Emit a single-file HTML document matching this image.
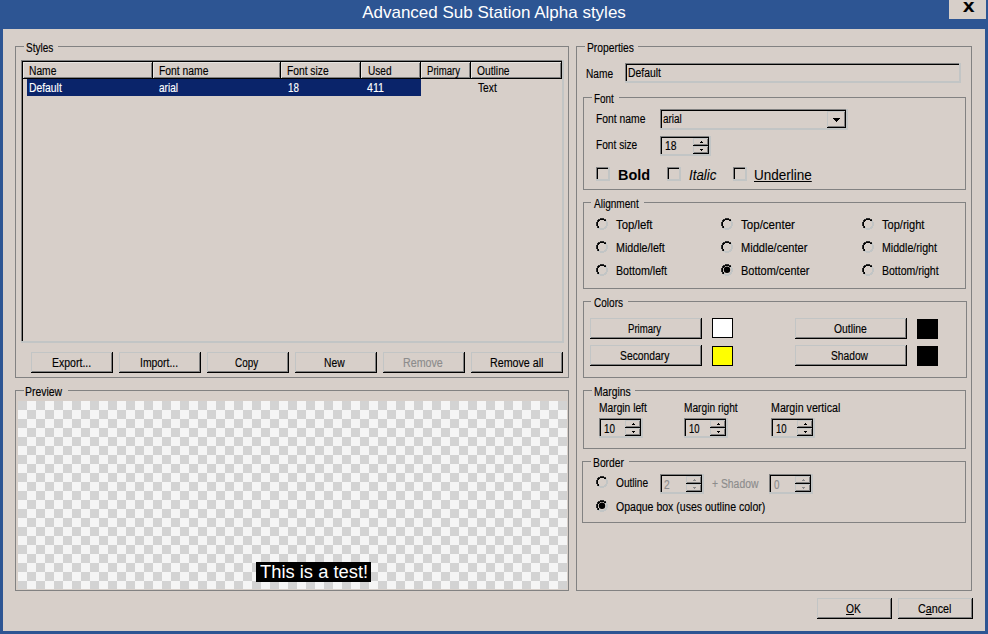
<!DOCTYPE html>
<html><head><meta charset="utf-8"><title>Advanced Sub Station Alpha styles</title>
<style>
html,body{margin:0;padding:0}
body{width:988px;height:634px;overflow:hidden;background:#2D5593;position:relative;font-family:"Liberation Sans",sans-serif;font-size:12.5px;color:#000;}
div,span{position:absolute;box-sizing:border-box;white-space:nowrap}
.t{transform-origin:0 0;-webkit-text-stroke:0.15px}
.client{left:3px;top:29px;width:982px;height:602px;background:#D7CFC9}
.gb{border:1px solid #828282}
.gl{background:#D7CFC9}
.btn{background:#D7CFC9;box-shadow:inset -1px -1px 0 #000,inset 1px 1px 0 #C2C5C5,inset -2px -2px 0 #808080}
.sunk{box-shadow:inset -2px -2px 0 #C2C5C5,inset 1px 1px 0 #808080,inset 2px 2px 0 #000}
.hdr{height:17px;background:#D7CFC9;box-shadow:inset -1px -1px 0 #000,inset 1px 1px 0 #e6e4e1,inset -2px -2px 0 #808080}
.sw{border:1px solid #000}
.sb{width:16px;height:8px;left:26px;box-shadow:inset -1px -1px 0 #000,inset 1px 1px 0 #C2C5C5,inset -2px -2px 0 #808080}
</style></head>
<body>
<div class="client"></div>
<div style="left:0;top:0;width:988px;height:29px;text-align:center;color:#fff;font-size:17px;line-height:25px;">Advanced Sub Station Alpha styles</div>
<div style="left:949px;top:0;width:37px;height:19px;background:#D7CFC9"></div>
<span class="t" style="left:962.80px;top:-4px;line-height:20px;height:20px;font-size:18px;font-weight:bold;transform:scaleX(1.1400)">x</span>
<div class="gb" style="left:15px;top:46px;width:554px;height:332px"></div>
<div class="gl" style="left:24px;top:46px;width:34px;height:1px"></div>
<span class="t" style="left:26.30px;top:41px;line-height:14px;height:14px;transform:scaleX(0.8020)">Styles</span>
<div class="sunk" style="left:21px;top:60px;width:543px;height:283px"></div>
<div class="hdr" style="left:23px;top:62px;width:130px"></div>
<span class="t" style="left:28.78px;top:64px;line-height:14px;height:14px;transform:scaleX(0.8212)">Name</span>
<div class="hdr" style="left:153px;top:62px;width:128px"></div>
<span class="t" style="left:158.87px;top:64px;line-height:14px;height:14px;transform:scaleX(0.8265)">Font name</span>
<div class="hdr" style="left:281px;top:62px;width:80px"></div>
<span class="t" style="left:286.68px;top:64px;line-height:14px;height:14px;transform:scaleX(0.8199)">Font size</span>
<div class="hdr" style="left:361px;top:62px;width:60px"></div>
<span class="t" style="left:367.50px;top:64px;line-height:14px;height:14px;transform:scaleX(0.8074)">Used</span>
<div class="hdr" style="left:421px;top:62px;width:50px"></div>
<span class="t" style="left:426.83px;top:64px;line-height:14px;height:14px;transform:scaleX(0.7663)">Primary</span>
<div class="hdr" style="left:471px;top:62px;width:91px"></div>
<span class="t" style="left:476.80px;top:64px;line-height:14px;height:14px;transform:scaleX(0.8221)">Outline</span>
<div style="left:27px;top:79px;width:394px;height:17px;background:#0A246A"></div>
<span class="t" style="left:28.77px;top:81px;line-height:14px;height:14px;color:#fff;transform:scaleX(0.8279)">Default</span>
<span class="t" style="left:159.00px;top:81px;line-height:14px;height:14px;color:#fff;transform:scaleX(0.8011)">arial</span>
<span class="t" style="left:288.30px;top:81px;line-height:14px;height:14px;color:#fff;transform:scaleX(0.7813)">18</span>
<span class="t" style="left:367.20px;top:81px;line-height:14px;height:14px;color:#fff;transform:scaleX(0.8510)">411</span>
<span class="t" style="left:478.00px;top:81px;line-height:14px;height:14px;transform:scaleX(0.8187)">Text</span>
<div class="btn" style="left:31px;top:352px;width:82px;height:21px"></div>
<span class="t" style="left:51.76px;top:356px;line-height:14px;height:14px;transform:scaleX(0.8409)">Export...</span>
<div class="btn" style="left:119px;top:352px;width:82px;height:21px"></div>
<span class="t" style="left:139.77px;top:356px;line-height:14px;height:14px;transform:scaleX(0.8294)">Import...</span>
<div class="btn" style="left:207px;top:352px;width:82px;height:21px"></div>
<span class="t" style="left:234.60px;top:356px;line-height:14px;height:14px;transform:scaleX(0.7918)">Copy</span>
<div class="btn" style="left:295px;top:352px;width:82px;height:21px"></div>
<span class="t" style="left:323.78px;top:356px;line-height:14px;height:14px;transform:scaleX(0.8247)">New</span>
<div class="btn" style="left:383px;top:352px;width:82px;height:21px"></div>
<span class="t" style="left:402.64px;top:356px;line-height:14px;height:14px;color:#8c8c8c;transform:scaleX(0.8554)">Remove</span>
<div class="btn" style="left:471px;top:352px;width:92px;height:21px"></div>
<span class="t" style="left:489.75px;top:356px;line-height:14px;height:14px;transform:scaleX(0.8544)">Remove all</span>
<div class="gb" style="left:15px;top:390px;width:554px;height:201px"></div>
<div class="gl" style="left:24px;top:390px;width:44px;height:1px"></div>
<span class="t" style="left:25.26px;top:385px;line-height:14px;height:14px;transform:scaleX(0.8350)">Preview</span>
<div style="left:18px;top:401px;width:549px;height:188px;background-color:#f5f5f5;background-image:conic-gradient(#f5f5f5 25%,#d3d3d3 0 50%,#f5f5f5 0 75%,#d3d3d3 0);background-size:18px 18px;"></div>
<div style="left:256px;top:562px;width:115px;height:20px;background:#000"></div>
<span class="t" style="left:259.90px;top:562px;line-height:20px;height:20px;font-size:18px;color:#fff;-webkit-text-stroke:0;transform:scaleX(1.0197)">This is a test!</span>
<div class="gb" style="left:576px;top:46px;width:396px;height:545px"></div>
<div class="gl" style="left:585px;top:46px;width:53px;height:1px"></div>
<span class="t" style="left:586.68px;top:41px;line-height:14px;height:14px;transform:scaleX(0.8238)">Properties</span>
<span class="t" style="left:585.89px;top:67px;line-height:14px;height:14px;transform:scaleX(0.8119)">Name</span>
<div class="sunk" style="left:625px;top:63px;width:336px;height:20px"></div>
<span class="t" style="left:627.77px;top:66px;line-height:14px;height:14px;transform:scaleX(0.8305)">Default</span>
<div class="gb" style="left:583px;top:97px;width:383px;height:93px"></div>
<div class="gl" style="left:592px;top:97px;width:27px;height:1px"></div>
<span class="t" style="left:593.81px;top:92px;line-height:14px;height:14px;transform:scaleX(0.7906)">Font</span>
<span class="t" style="left:595.87px;top:112px;line-height:14px;height:14px;transform:scaleX(0.8265)">Font name</span>
<div class="sunk" style="left:660px;top:109px;width:188px;height:21px"><div style="left:167px;top:2px;width:19px;height:17px;box-shadow:inset -1px -1px 0 #000,inset 1px 1px 0 #C2C5C5,inset -2px -2px 0 #808080"></div><svg style="position:absolute;left:173px;top:9px" width="7" height="4" viewBox="0 0 7 4"><path d="M0 0h7v1h-1v1h-1v1h-1v1h-1v-1h-1v-1h-1v-1h-1z" fill="#000"/></svg></div>
<span class="t" style="left:662.90px;top:112px;line-height:14px;height:14px;transform:scaleX(0.7967)">arial</span>
<span class="t" style="left:595.89px;top:138px;line-height:14px;height:14px;transform:scaleX(0.8119)">Font size</span>
<div class="sunk" style="left:660px;top:136px;width:51px;height:20px"><div class="sb" style="top:2px;left:33px"></div><div class="sb" style="top:10px;left:33px"></div><svg style="position:absolute;left:33px;top:2px" width="16" height="16" viewBox="0 0 16 16"><path d="M8 3h1v1h1v1h-3v-1h1z M7 11h3v1h-1v1h-1v-1h-1z" fill="#000"/></svg></div>
<span class="t" style="left:664.70px;top:139px;line-height:14px;height:14px;color:#000;transform:scaleX(0.8243)">18</span>
<div class="sunk" style="left:596px;top:167px;width:14px;height:14px"></div>
<span class="t" style="left:617.80px;top:167px;line-height:16px;height:16px;font-size:14px;font-weight:bold;-webkit-text-stroke:0;transform:scaleX(1.0310)">Bold</span>
<div class="sunk" style="left:667px;top:167px;width:14px;height:14px"></div>
<span class="t" style="left:688.70px;top:167px;line-height:16px;height:16px;font-size:14px;font-style:italic;-webkit-text-stroke:0.05px;transform:scaleX(0.9484)">Italic</span>
<div class="sunk" style="left:733px;top:167px;width:14px;height:14px"></div>
<span class="t" style="left:753.54px;top:167px;line-height:16px;height:16px;font-size:14px;text-decoration:underline;-webkit-text-stroke:0.05px;transform:scaleX(0.9639)">Underline</span>
<div class="gb" style="left:583px;top:202px;width:383px;height:87px"></div>
<div class="gl" style="left:591px;top:202px;width:53px;height:1px"></div>
<span class="t" style="left:593.90px;top:197px;line-height:14px;height:14px;transform:scaleX(0.8038)">Alignment</span>
<svg style="position:absolute;left:596px;top:218px" width="12" height="12" viewBox="0 0 12 12" shape-rendering="crispEdges"><rect x="10" y="2" width="1" height="1" fill="#C2C5C5"/><rect x="10" y="3" width="1" height="1" fill="#C2C5C5"/><rect x="11" y="4" width="1" height="1" fill="#C2C5C5"/><rect x="11" y="5" width="1" height="1" fill="#C2C5C5"/><rect x="11" y="6" width="1" height="1" fill="#C2C5C5"/><rect x="11" y="7" width="1" height="1" fill="#C2C5C5"/><rect x="10" y="8" width="1" height="1" fill="#C2C5C5"/><rect x="10" y="9" width="1" height="1" fill="#C2C5C5"/><rect x="2" y="10" width="2" height="1" fill="#C2C5C5"/><rect x="8" y="10" width="2" height="1" fill="#C2C5C5"/><rect x="4" y="11" width="4" height="1" fill="#C2C5C5"/><rect x="9" y="3" width="1" height="1" fill="#C2C5C5"/><rect x="10" y="4" width="1" height="1" fill="#C2C5C5"/><rect x="10" y="5" width="1" height="1" fill="#C2C5C5"/><rect x="10" y="6" width="1" height="1" fill="#C2C5C5"/><rect x="10" y="7" width="1" height="1" fill="#C2C5C5"/><rect x="9" y="8" width="1" height="1" fill="#C2C5C5"/><rect x="8" y="9" width="2" height="1" fill="#C2C5C5"/><rect x="4" y="10" width="4" height="1" fill="#C2C5C5"/><rect x="3" y="9" width="1" height="1" fill="#C2C5C5"/><rect x="4" y="0" width="4" height="1" fill="#303030"/><rect x="2" y="1" width="2" height="1" fill="#303030"/><rect x="8" y="1" width="2" height="1" fill="#303030"/><rect x="1" y="2" width="1" height="1" fill="#303030"/><rect x="1" y="3" width="1" height="1" fill="#303030"/><rect x="0" y="4" width="1" height="1" fill="#303030"/><rect x="0" y="5" width="1" height="1" fill="#303030"/><rect x="0" y="6" width="1" height="1" fill="#303030"/><rect x="0" y="7" width="1" height="1" fill="#303030"/><rect x="1" y="8" width="1" height="1" fill="#303030"/><rect x="1" y="9" width="1" height="1" fill="#303030"/><rect x="4" y="1" width="4" height="1" fill="#000"/><rect x="2" y="2" width="2" height="1" fill="#000"/><rect x="8" y="2" width="2" height="1" fill="#000"/><rect x="2" y="3" width="1" height="1" fill="#000"/><rect x="1" y="4" width="1" height="1" fill="#000"/><rect x="1" y="5" width="1" height="1" fill="#000"/><rect x="1" y="6" width="1" height="1" fill="#000"/><rect x="1" y="7" width="1" height="1" fill="#000"/><rect x="2" y="8" width="1" height="1" fill="#000"/><rect x="2" y="9" width="1" height="1" fill="#000"/></svg>
<span class="t" style="left:615.90px;top:218px;line-height:14px;height:14px;transform:scaleX(0.9062)">Top/left</span>
<svg style="position:absolute;left:721px;top:218px" width="12" height="12" viewBox="0 0 12 12" shape-rendering="crispEdges"><rect x="10" y="2" width="1" height="1" fill="#C2C5C5"/><rect x="10" y="3" width="1" height="1" fill="#C2C5C5"/><rect x="11" y="4" width="1" height="1" fill="#C2C5C5"/><rect x="11" y="5" width="1" height="1" fill="#C2C5C5"/><rect x="11" y="6" width="1" height="1" fill="#C2C5C5"/><rect x="11" y="7" width="1" height="1" fill="#C2C5C5"/><rect x="10" y="8" width="1" height="1" fill="#C2C5C5"/><rect x="10" y="9" width="1" height="1" fill="#C2C5C5"/><rect x="2" y="10" width="2" height="1" fill="#C2C5C5"/><rect x="8" y="10" width="2" height="1" fill="#C2C5C5"/><rect x="4" y="11" width="4" height="1" fill="#C2C5C5"/><rect x="9" y="3" width="1" height="1" fill="#C2C5C5"/><rect x="10" y="4" width="1" height="1" fill="#C2C5C5"/><rect x="10" y="5" width="1" height="1" fill="#C2C5C5"/><rect x="10" y="6" width="1" height="1" fill="#C2C5C5"/><rect x="10" y="7" width="1" height="1" fill="#C2C5C5"/><rect x="9" y="8" width="1" height="1" fill="#C2C5C5"/><rect x="8" y="9" width="2" height="1" fill="#C2C5C5"/><rect x="4" y="10" width="4" height="1" fill="#C2C5C5"/><rect x="3" y="9" width="1" height="1" fill="#C2C5C5"/><rect x="4" y="0" width="4" height="1" fill="#303030"/><rect x="2" y="1" width="2" height="1" fill="#303030"/><rect x="8" y="1" width="2" height="1" fill="#303030"/><rect x="1" y="2" width="1" height="1" fill="#303030"/><rect x="1" y="3" width="1" height="1" fill="#303030"/><rect x="0" y="4" width="1" height="1" fill="#303030"/><rect x="0" y="5" width="1" height="1" fill="#303030"/><rect x="0" y="6" width="1" height="1" fill="#303030"/><rect x="0" y="7" width="1" height="1" fill="#303030"/><rect x="1" y="8" width="1" height="1" fill="#303030"/><rect x="1" y="9" width="1" height="1" fill="#303030"/><rect x="4" y="1" width="4" height="1" fill="#000"/><rect x="2" y="2" width="2" height="1" fill="#000"/><rect x="8" y="2" width="2" height="1" fill="#000"/><rect x="2" y="3" width="1" height="1" fill="#000"/><rect x="1" y="4" width="1" height="1" fill="#000"/><rect x="1" y="5" width="1" height="1" fill="#000"/><rect x="1" y="6" width="1" height="1" fill="#000"/><rect x="1" y="7" width="1" height="1" fill="#000"/><rect x="2" y="8" width="1" height="1" fill="#000"/><rect x="2" y="9" width="1" height="1" fill="#000"/></svg>
<span class="t" style="left:741.10px;top:218px;line-height:14px;height:14px;transform:scaleX(0.9243)">Top/center</span>
<svg style="position:absolute;left:862px;top:218px" width="12" height="12" viewBox="0 0 12 12" shape-rendering="crispEdges"><rect x="10" y="2" width="1" height="1" fill="#C2C5C5"/><rect x="10" y="3" width="1" height="1" fill="#C2C5C5"/><rect x="11" y="4" width="1" height="1" fill="#C2C5C5"/><rect x="11" y="5" width="1" height="1" fill="#C2C5C5"/><rect x="11" y="6" width="1" height="1" fill="#C2C5C5"/><rect x="11" y="7" width="1" height="1" fill="#C2C5C5"/><rect x="10" y="8" width="1" height="1" fill="#C2C5C5"/><rect x="10" y="9" width="1" height="1" fill="#C2C5C5"/><rect x="2" y="10" width="2" height="1" fill="#C2C5C5"/><rect x="8" y="10" width="2" height="1" fill="#C2C5C5"/><rect x="4" y="11" width="4" height="1" fill="#C2C5C5"/><rect x="9" y="3" width="1" height="1" fill="#C2C5C5"/><rect x="10" y="4" width="1" height="1" fill="#C2C5C5"/><rect x="10" y="5" width="1" height="1" fill="#C2C5C5"/><rect x="10" y="6" width="1" height="1" fill="#C2C5C5"/><rect x="10" y="7" width="1" height="1" fill="#C2C5C5"/><rect x="9" y="8" width="1" height="1" fill="#C2C5C5"/><rect x="8" y="9" width="2" height="1" fill="#C2C5C5"/><rect x="4" y="10" width="4" height="1" fill="#C2C5C5"/><rect x="3" y="9" width="1" height="1" fill="#C2C5C5"/><rect x="4" y="0" width="4" height="1" fill="#303030"/><rect x="2" y="1" width="2" height="1" fill="#303030"/><rect x="8" y="1" width="2" height="1" fill="#303030"/><rect x="1" y="2" width="1" height="1" fill="#303030"/><rect x="1" y="3" width="1" height="1" fill="#303030"/><rect x="0" y="4" width="1" height="1" fill="#303030"/><rect x="0" y="5" width="1" height="1" fill="#303030"/><rect x="0" y="6" width="1" height="1" fill="#303030"/><rect x="0" y="7" width="1" height="1" fill="#303030"/><rect x="1" y="8" width="1" height="1" fill="#303030"/><rect x="1" y="9" width="1" height="1" fill="#303030"/><rect x="4" y="1" width="4" height="1" fill="#000"/><rect x="2" y="2" width="2" height="1" fill="#000"/><rect x="8" y="2" width="2" height="1" fill="#000"/><rect x="2" y="3" width="1" height="1" fill="#000"/><rect x="1" y="4" width="1" height="1" fill="#000"/><rect x="1" y="5" width="1" height="1" fill="#000"/><rect x="1" y="6" width="1" height="1" fill="#000"/><rect x="1" y="7" width="1" height="1" fill="#000"/><rect x="2" y="8" width="1" height="1" fill="#000"/><rect x="2" y="9" width="1" height="1" fill="#000"/></svg>
<span class="t" style="left:882.30px;top:218px;line-height:14px;height:14px;transform:scaleX(0.8851)">Top/right</span>
<svg style="position:absolute;left:596px;top:241px" width="12" height="12" viewBox="0 0 12 12" shape-rendering="crispEdges"><rect x="10" y="2" width="1" height="1" fill="#C2C5C5"/><rect x="10" y="3" width="1" height="1" fill="#C2C5C5"/><rect x="11" y="4" width="1" height="1" fill="#C2C5C5"/><rect x="11" y="5" width="1" height="1" fill="#C2C5C5"/><rect x="11" y="6" width="1" height="1" fill="#C2C5C5"/><rect x="11" y="7" width="1" height="1" fill="#C2C5C5"/><rect x="10" y="8" width="1" height="1" fill="#C2C5C5"/><rect x="10" y="9" width="1" height="1" fill="#C2C5C5"/><rect x="2" y="10" width="2" height="1" fill="#C2C5C5"/><rect x="8" y="10" width="2" height="1" fill="#C2C5C5"/><rect x="4" y="11" width="4" height="1" fill="#C2C5C5"/><rect x="9" y="3" width="1" height="1" fill="#C2C5C5"/><rect x="10" y="4" width="1" height="1" fill="#C2C5C5"/><rect x="10" y="5" width="1" height="1" fill="#C2C5C5"/><rect x="10" y="6" width="1" height="1" fill="#C2C5C5"/><rect x="10" y="7" width="1" height="1" fill="#C2C5C5"/><rect x="9" y="8" width="1" height="1" fill="#C2C5C5"/><rect x="8" y="9" width="2" height="1" fill="#C2C5C5"/><rect x="4" y="10" width="4" height="1" fill="#C2C5C5"/><rect x="3" y="9" width="1" height="1" fill="#C2C5C5"/><rect x="4" y="0" width="4" height="1" fill="#303030"/><rect x="2" y="1" width="2" height="1" fill="#303030"/><rect x="8" y="1" width="2" height="1" fill="#303030"/><rect x="1" y="2" width="1" height="1" fill="#303030"/><rect x="1" y="3" width="1" height="1" fill="#303030"/><rect x="0" y="4" width="1" height="1" fill="#303030"/><rect x="0" y="5" width="1" height="1" fill="#303030"/><rect x="0" y="6" width="1" height="1" fill="#303030"/><rect x="0" y="7" width="1" height="1" fill="#303030"/><rect x="1" y="8" width="1" height="1" fill="#303030"/><rect x="1" y="9" width="1" height="1" fill="#303030"/><rect x="4" y="1" width="4" height="1" fill="#000"/><rect x="2" y="2" width="2" height="1" fill="#000"/><rect x="8" y="2" width="2" height="1" fill="#000"/><rect x="2" y="3" width="1" height="1" fill="#000"/><rect x="1" y="4" width="1" height="1" fill="#000"/><rect x="1" y="5" width="1" height="1" fill="#000"/><rect x="1" y="6" width="1" height="1" fill="#000"/><rect x="1" y="7" width="1" height="1" fill="#000"/><rect x="2" y="8" width="1" height="1" fill="#000"/><rect x="2" y="9" width="1" height="1" fill="#000"/></svg>
<span class="t" style="left:615.64px;top:241px;line-height:14px;height:14px;transform:scaleX(0.8567)">Middle/left</span>
<svg style="position:absolute;left:721px;top:241px" width="12" height="12" viewBox="0 0 12 12" shape-rendering="crispEdges"><rect x="10" y="2" width="1" height="1" fill="#C2C5C5"/><rect x="10" y="3" width="1" height="1" fill="#C2C5C5"/><rect x="11" y="4" width="1" height="1" fill="#C2C5C5"/><rect x="11" y="5" width="1" height="1" fill="#C2C5C5"/><rect x="11" y="6" width="1" height="1" fill="#C2C5C5"/><rect x="11" y="7" width="1" height="1" fill="#C2C5C5"/><rect x="10" y="8" width="1" height="1" fill="#C2C5C5"/><rect x="10" y="9" width="1" height="1" fill="#C2C5C5"/><rect x="2" y="10" width="2" height="1" fill="#C2C5C5"/><rect x="8" y="10" width="2" height="1" fill="#C2C5C5"/><rect x="4" y="11" width="4" height="1" fill="#C2C5C5"/><rect x="9" y="3" width="1" height="1" fill="#C2C5C5"/><rect x="10" y="4" width="1" height="1" fill="#C2C5C5"/><rect x="10" y="5" width="1" height="1" fill="#C2C5C5"/><rect x="10" y="6" width="1" height="1" fill="#C2C5C5"/><rect x="10" y="7" width="1" height="1" fill="#C2C5C5"/><rect x="9" y="8" width="1" height="1" fill="#C2C5C5"/><rect x="8" y="9" width="2" height="1" fill="#C2C5C5"/><rect x="4" y="10" width="4" height="1" fill="#C2C5C5"/><rect x="3" y="9" width="1" height="1" fill="#C2C5C5"/><rect x="4" y="0" width="4" height="1" fill="#303030"/><rect x="2" y="1" width="2" height="1" fill="#303030"/><rect x="8" y="1" width="2" height="1" fill="#303030"/><rect x="1" y="2" width="1" height="1" fill="#303030"/><rect x="1" y="3" width="1" height="1" fill="#303030"/><rect x="0" y="4" width="1" height="1" fill="#303030"/><rect x="0" y="5" width="1" height="1" fill="#303030"/><rect x="0" y="6" width="1" height="1" fill="#303030"/><rect x="0" y="7" width="1" height="1" fill="#303030"/><rect x="1" y="8" width="1" height="1" fill="#303030"/><rect x="1" y="9" width="1" height="1" fill="#303030"/><rect x="4" y="1" width="4" height="1" fill="#000"/><rect x="2" y="2" width="2" height="1" fill="#000"/><rect x="8" y="2" width="2" height="1" fill="#000"/><rect x="2" y="3" width="1" height="1" fill="#000"/><rect x="1" y="4" width="1" height="1" fill="#000"/><rect x="1" y="5" width="1" height="1" fill="#000"/><rect x="1" y="6" width="1" height="1" fill="#000"/><rect x="1" y="7" width="1" height="1" fill="#000"/><rect x="2" y="8" width="1" height="1" fill="#000"/><rect x="2" y="9" width="1" height="1" fill="#000"/></svg>
<span class="t" style="left:740.81px;top:241px;line-height:14px;height:14px;transform:scaleX(0.8853)">Middle/center</span>
<svg style="position:absolute;left:862px;top:241px" width="12" height="12" viewBox="0 0 12 12" shape-rendering="crispEdges"><rect x="10" y="2" width="1" height="1" fill="#C2C5C5"/><rect x="10" y="3" width="1" height="1" fill="#C2C5C5"/><rect x="11" y="4" width="1" height="1" fill="#C2C5C5"/><rect x="11" y="5" width="1" height="1" fill="#C2C5C5"/><rect x="11" y="6" width="1" height="1" fill="#C2C5C5"/><rect x="11" y="7" width="1" height="1" fill="#C2C5C5"/><rect x="10" y="8" width="1" height="1" fill="#C2C5C5"/><rect x="10" y="9" width="1" height="1" fill="#C2C5C5"/><rect x="2" y="10" width="2" height="1" fill="#C2C5C5"/><rect x="8" y="10" width="2" height="1" fill="#C2C5C5"/><rect x="4" y="11" width="4" height="1" fill="#C2C5C5"/><rect x="9" y="3" width="1" height="1" fill="#C2C5C5"/><rect x="10" y="4" width="1" height="1" fill="#C2C5C5"/><rect x="10" y="5" width="1" height="1" fill="#C2C5C5"/><rect x="10" y="6" width="1" height="1" fill="#C2C5C5"/><rect x="10" y="7" width="1" height="1" fill="#C2C5C5"/><rect x="9" y="8" width="1" height="1" fill="#C2C5C5"/><rect x="8" y="9" width="2" height="1" fill="#C2C5C5"/><rect x="4" y="10" width="4" height="1" fill="#C2C5C5"/><rect x="3" y="9" width="1" height="1" fill="#C2C5C5"/><rect x="4" y="0" width="4" height="1" fill="#303030"/><rect x="2" y="1" width="2" height="1" fill="#303030"/><rect x="8" y="1" width="2" height="1" fill="#303030"/><rect x="1" y="2" width="1" height="1" fill="#303030"/><rect x="1" y="3" width="1" height="1" fill="#303030"/><rect x="0" y="4" width="1" height="1" fill="#303030"/><rect x="0" y="5" width="1" height="1" fill="#303030"/><rect x="0" y="6" width="1" height="1" fill="#303030"/><rect x="0" y="7" width="1" height="1" fill="#303030"/><rect x="1" y="8" width="1" height="1" fill="#303030"/><rect x="1" y="9" width="1" height="1" fill="#303030"/><rect x="4" y="1" width="4" height="1" fill="#000"/><rect x="2" y="2" width="2" height="1" fill="#000"/><rect x="8" y="2" width="2" height="1" fill="#000"/><rect x="2" y="3" width="1" height="1" fill="#000"/><rect x="1" y="4" width="1" height="1" fill="#000"/><rect x="1" y="5" width="1" height="1" fill="#000"/><rect x="1" y="6" width="1" height="1" fill="#000"/><rect x="1" y="7" width="1" height="1" fill="#000"/><rect x="2" y="8" width="1" height="1" fill="#000"/><rect x="2" y="9" width="1" height="1" fill="#000"/></svg>
<span class="t" style="left:882.05px;top:241px;line-height:14px;height:14px;transform:scaleX(0.8497)">Middle/right</span>
<svg style="position:absolute;left:596px;top:264px" width="12" height="12" viewBox="0 0 12 12" shape-rendering="crispEdges"><rect x="10" y="2" width="1" height="1" fill="#C2C5C5"/><rect x="10" y="3" width="1" height="1" fill="#C2C5C5"/><rect x="11" y="4" width="1" height="1" fill="#C2C5C5"/><rect x="11" y="5" width="1" height="1" fill="#C2C5C5"/><rect x="11" y="6" width="1" height="1" fill="#C2C5C5"/><rect x="11" y="7" width="1" height="1" fill="#C2C5C5"/><rect x="10" y="8" width="1" height="1" fill="#C2C5C5"/><rect x="10" y="9" width="1" height="1" fill="#C2C5C5"/><rect x="2" y="10" width="2" height="1" fill="#C2C5C5"/><rect x="8" y="10" width="2" height="1" fill="#C2C5C5"/><rect x="4" y="11" width="4" height="1" fill="#C2C5C5"/><rect x="9" y="3" width="1" height="1" fill="#C2C5C5"/><rect x="10" y="4" width="1" height="1" fill="#C2C5C5"/><rect x="10" y="5" width="1" height="1" fill="#C2C5C5"/><rect x="10" y="6" width="1" height="1" fill="#C2C5C5"/><rect x="10" y="7" width="1" height="1" fill="#C2C5C5"/><rect x="9" y="8" width="1" height="1" fill="#C2C5C5"/><rect x="8" y="9" width="2" height="1" fill="#C2C5C5"/><rect x="4" y="10" width="4" height="1" fill="#C2C5C5"/><rect x="3" y="9" width="1" height="1" fill="#C2C5C5"/><rect x="4" y="0" width="4" height="1" fill="#303030"/><rect x="2" y="1" width="2" height="1" fill="#303030"/><rect x="8" y="1" width="2" height="1" fill="#303030"/><rect x="1" y="2" width="1" height="1" fill="#303030"/><rect x="1" y="3" width="1" height="1" fill="#303030"/><rect x="0" y="4" width="1" height="1" fill="#303030"/><rect x="0" y="5" width="1" height="1" fill="#303030"/><rect x="0" y="6" width="1" height="1" fill="#303030"/><rect x="0" y="7" width="1" height="1" fill="#303030"/><rect x="1" y="8" width="1" height="1" fill="#303030"/><rect x="1" y="9" width="1" height="1" fill="#303030"/><rect x="4" y="1" width="4" height="1" fill="#000"/><rect x="2" y="2" width="2" height="1" fill="#000"/><rect x="8" y="2" width="2" height="1" fill="#000"/><rect x="2" y="3" width="1" height="1" fill="#000"/><rect x="1" y="4" width="1" height="1" fill="#000"/><rect x="1" y="5" width="1" height="1" fill="#000"/><rect x="1" y="6" width="1" height="1" fill="#000"/><rect x="1" y="7" width="1" height="1" fill="#000"/><rect x="2" y="8" width="1" height="1" fill="#000"/><rect x="2" y="9" width="1" height="1" fill="#000"/></svg>
<span class="t" style="left:615.65px;top:264px;line-height:14px;height:14px;transform:scaleX(0.8537)">Bottom/left</span>
<svg style="position:absolute;left:721px;top:264px" width="12" height="12" viewBox="0 0 12 12" shape-rendering="crispEdges"><rect x="10" y="2" width="1" height="1" fill="#C2C5C5"/><rect x="10" y="3" width="1" height="1" fill="#C2C5C5"/><rect x="11" y="4" width="1" height="1" fill="#C2C5C5"/><rect x="11" y="5" width="1" height="1" fill="#C2C5C5"/><rect x="11" y="6" width="1" height="1" fill="#C2C5C5"/><rect x="11" y="7" width="1" height="1" fill="#C2C5C5"/><rect x="10" y="8" width="1" height="1" fill="#C2C5C5"/><rect x="10" y="9" width="1" height="1" fill="#C2C5C5"/><rect x="2" y="10" width="2" height="1" fill="#C2C5C5"/><rect x="8" y="10" width="2" height="1" fill="#C2C5C5"/><rect x="4" y="11" width="4" height="1" fill="#C2C5C5"/><rect x="9" y="3" width="1" height="1" fill="#C2C5C5"/><rect x="10" y="4" width="1" height="1" fill="#C2C5C5"/><rect x="10" y="5" width="1" height="1" fill="#C2C5C5"/><rect x="10" y="6" width="1" height="1" fill="#C2C5C5"/><rect x="10" y="7" width="1" height="1" fill="#C2C5C5"/><rect x="9" y="8" width="1" height="1" fill="#C2C5C5"/><rect x="8" y="9" width="2" height="1" fill="#C2C5C5"/><rect x="4" y="10" width="4" height="1" fill="#C2C5C5"/><rect x="3" y="9" width="1" height="1" fill="#C2C5C5"/><rect x="4" y="0" width="4" height="1" fill="#303030"/><rect x="2" y="1" width="2" height="1" fill="#303030"/><rect x="8" y="1" width="2" height="1" fill="#303030"/><rect x="1" y="2" width="1" height="1" fill="#303030"/><rect x="1" y="3" width="1" height="1" fill="#303030"/><rect x="0" y="4" width="1" height="1" fill="#303030"/><rect x="0" y="5" width="1" height="1" fill="#303030"/><rect x="0" y="6" width="1" height="1" fill="#303030"/><rect x="0" y="7" width="1" height="1" fill="#303030"/><rect x="1" y="8" width="1" height="1" fill="#303030"/><rect x="1" y="9" width="1" height="1" fill="#303030"/><rect x="4" y="1" width="4" height="1" fill="#000"/><rect x="2" y="2" width="2" height="1" fill="#000"/><rect x="8" y="2" width="2" height="1" fill="#000"/><rect x="2" y="3" width="1" height="1" fill="#000"/><rect x="1" y="4" width="1" height="1" fill="#000"/><rect x="1" y="5" width="1" height="1" fill="#000"/><rect x="1" y="6" width="1" height="1" fill="#000"/><rect x="1" y="7" width="1" height="1" fill="#000"/><rect x="2" y="8" width="1" height="1" fill="#000"/><rect x="2" y="9" width="1" height="1" fill="#000"/></svg>
<svg style="position:absolute;left:721px;top:264px" width="12" height="12" viewBox="0 0 12 12"><circle cx="6" cy="5.8" r="3.2" fill="#000"/></svg>
<span class="t" style="left:740.82px;top:264px;line-height:14px;height:14px;transform:scaleX(0.8793)">Bottom/center</span>
<svg style="position:absolute;left:862px;top:264px" width="12" height="12" viewBox="0 0 12 12" shape-rendering="crispEdges"><rect x="10" y="2" width="1" height="1" fill="#C2C5C5"/><rect x="10" y="3" width="1" height="1" fill="#C2C5C5"/><rect x="11" y="4" width="1" height="1" fill="#C2C5C5"/><rect x="11" y="5" width="1" height="1" fill="#C2C5C5"/><rect x="11" y="6" width="1" height="1" fill="#C2C5C5"/><rect x="11" y="7" width="1" height="1" fill="#C2C5C5"/><rect x="10" y="8" width="1" height="1" fill="#C2C5C5"/><rect x="10" y="9" width="1" height="1" fill="#C2C5C5"/><rect x="2" y="10" width="2" height="1" fill="#C2C5C5"/><rect x="8" y="10" width="2" height="1" fill="#C2C5C5"/><rect x="4" y="11" width="4" height="1" fill="#C2C5C5"/><rect x="9" y="3" width="1" height="1" fill="#C2C5C5"/><rect x="10" y="4" width="1" height="1" fill="#C2C5C5"/><rect x="10" y="5" width="1" height="1" fill="#C2C5C5"/><rect x="10" y="6" width="1" height="1" fill="#C2C5C5"/><rect x="10" y="7" width="1" height="1" fill="#C2C5C5"/><rect x="9" y="8" width="1" height="1" fill="#C2C5C5"/><rect x="8" y="9" width="2" height="1" fill="#C2C5C5"/><rect x="4" y="10" width="4" height="1" fill="#C2C5C5"/><rect x="3" y="9" width="1" height="1" fill="#C2C5C5"/><rect x="4" y="0" width="4" height="1" fill="#303030"/><rect x="2" y="1" width="2" height="1" fill="#303030"/><rect x="8" y="1" width="2" height="1" fill="#303030"/><rect x="1" y="2" width="1" height="1" fill="#303030"/><rect x="1" y="3" width="1" height="1" fill="#303030"/><rect x="0" y="4" width="1" height="1" fill="#303030"/><rect x="0" y="5" width="1" height="1" fill="#303030"/><rect x="0" y="6" width="1" height="1" fill="#303030"/><rect x="0" y="7" width="1" height="1" fill="#303030"/><rect x="1" y="8" width="1" height="1" fill="#303030"/><rect x="1" y="9" width="1" height="1" fill="#303030"/><rect x="4" y="1" width="4" height="1" fill="#000"/><rect x="2" y="2" width="2" height="1" fill="#000"/><rect x="8" y="2" width="2" height="1" fill="#000"/><rect x="2" y="3" width="1" height="1" fill="#000"/><rect x="1" y="4" width="1" height="1" fill="#000"/><rect x="1" y="5" width="1" height="1" fill="#000"/><rect x="1" y="6" width="1" height="1" fill="#000"/><rect x="1" y="7" width="1" height="1" fill="#000"/><rect x="2" y="8" width="1" height="1" fill="#000"/><rect x="2" y="9" width="1" height="1" fill="#000"/></svg>
<span class="t" style="left:882.06px;top:264px;line-height:14px;height:14px;transform:scaleX(0.8399)">Bottom/right</span>
<div class="gb" style="left:583px;top:301px;width:384px;height:77px"></div>
<div class="gl" style="left:591px;top:301px;width:37px;height:1px"></div>
<span class="t" style="left:593.80px;top:296px;line-height:14px;height:14px;transform:scaleX(0.8029)">Colors</span>
<div class="btn" style="left:590px;top:318px;width:112px;height:21px"></div>
<span class="t" style="left:627.83px;top:322px;line-height:14px;height:14px;transform:scaleX(0.7686)">Primary</span>
<div class="btn" style="left:590px;top:345px;width:112px;height:21px"></div>
<span class="t" style="left:620.30px;top:349px;line-height:14px;height:14px;transform:scaleX(0.8263)">Secondary</span>
<div class="btn" style="left:795px;top:318px;width:112px;height:21px"></div>
<span class="t" style="left:833.50px;top:322px;line-height:14px;height:14px;transform:scaleX(0.8272)">Outline</span>
<div class="btn" style="left:795px;top:345px;width:112px;height:21px"></div>
<span class="t" style="left:831.40px;top:349px;line-height:14px;height:14px;transform:scaleX(0.8192)">Shadow</span>
<div class="sw" style="left:712px;top:318px;width:21px;height:20px;background:#fff"></div>
<div class="sw" style="left:712px;top:346px;width:21px;height:20px;background:#ffff00"></div>
<div class="sw" style="left:917px;top:319px;width:21px;height:20px;background:#000"></div>
<div class="sw" style="left:917px;top:346px;width:21px;height:20px;background:#000"></div>
<div class="gb" style="left:583px;top:390px;width:383px;height:59px"></div>
<div class="gl" style="left:592px;top:390px;width:43px;height:1px"></div>
<span class="t" style="left:593.77px;top:385px;line-height:14px;height:14px;transform:scaleX(0.8262)">Margins</span>
<span class="t" style="left:598.88px;top:401px;line-height:14px;height:14px;transform:scaleX(0.8189)">Margin left</span>
<span class="t" style="left:683.79px;top:401px;line-height:14px;height:14px;transform:scaleX(0.8134)">Margin right</span>
<span class="t" style="left:770.75px;top:401px;line-height:14px;height:14px;transform:scaleX(0.8529)">Margin vertical</span>
<div class="sunk" style="left:599px;top:418px;width:44px;height:20px"><div class="sb" style="top:2px;left:26px"></div><div class="sb" style="top:10px;left:26px"></div><svg style="position:absolute;left:26px;top:2px" width="16" height="16" viewBox="0 0 16 16"><path d="M8 3h1v1h1v1h-3v-1h1z M7 11h3v1h-1v1h-1v-1h-1z" fill="#000"/></svg></div>
<span class="t" style="left:604.30px;top:422px;line-height:14px;height:14px;color:#000;transform:scaleX(0.7884)">10</span>
<div class="sunk" style="left:684px;top:418px;width:44px;height:20px"><div class="sb" style="top:2px;left:26px"></div><div class="sb" style="top:10px;left:26px"></div><svg style="position:absolute;left:26px;top:2px" width="16" height="16" viewBox="0 0 16 16"><path d="M8 3h1v1h1v1h-3v-1h1z M7 11h3v1h-1v1h-1v-1h-1z" fill="#000"/></svg></div>
<span class="t" style="left:689.10px;top:422px;line-height:14px;height:14px;color:#000;transform:scaleX(0.7598)">10</span>
<div class="sunk" style="left:771px;top:418px;width:44px;height:20px"><div class="sb" style="top:2px;left:26px"></div><div class="sb" style="top:10px;left:26px"></div><svg style="position:absolute;left:26px;top:2px" width="16" height="16" viewBox="0 0 16 16"><path d="M8 3h1v1h1v1h-3v-1h1z M7 11h3v1h-1v1h-1v-1h-1z" fill="#000"/></svg></div>
<span class="t" style="left:776.20px;top:422px;line-height:14px;height:14px;color:#000;transform:scaleX(0.7669)">10</span>
<div class="gb" style="left:582px;top:461px;width:384px;height:62px"></div>
<div class="gl" style="left:591px;top:461px;width:38px;height:1px"></div>
<span class="t" style="left:592.97px;top:456px;line-height:14px;height:14px;transform:scaleX(0.8252)">Border</span>
<svg style="position:absolute;left:596px;top:476px" width="12" height="12" viewBox="0 0 12 12" shape-rendering="crispEdges"><rect x="10" y="2" width="1" height="1" fill="#C2C5C5"/><rect x="10" y="3" width="1" height="1" fill="#C2C5C5"/><rect x="11" y="4" width="1" height="1" fill="#C2C5C5"/><rect x="11" y="5" width="1" height="1" fill="#C2C5C5"/><rect x="11" y="6" width="1" height="1" fill="#C2C5C5"/><rect x="11" y="7" width="1" height="1" fill="#C2C5C5"/><rect x="10" y="8" width="1" height="1" fill="#C2C5C5"/><rect x="10" y="9" width="1" height="1" fill="#C2C5C5"/><rect x="2" y="10" width="2" height="1" fill="#C2C5C5"/><rect x="8" y="10" width="2" height="1" fill="#C2C5C5"/><rect x="4" y="11" width="4" height="1" fill="#C2C5C5"/><rect x="9" y="3" width="1" height="1" fill="#C2C5C5"/><rect x="10" y="4" width="1" height="1" fill="#C2C5C5"/><rect x="10" y="5" width="1" height="1" fill="#C2C5C5"/><rect x="10" y="6" width="1" height="1" fill="#C2C5C5"/><rect x="10" y="7" width="1" height="1" fill="#C2C5C5"/><rect x="9" y="8" width="1" height="1" fill="#C2C5C5"/><rect x="8" y="9" width="2" height="1" fill="#C2C5C5"/><rect x="4" y="10" width="4" height="1" fill="#C2C5C5"/><rect x="3" y="9" width="1" height="1" fill="#C2C5C5"/><rect x="4" y="0" width="4" height="1" fill="#303030"/><rect x="2" y="1" width="2" height="1" fill="#303030"/><rect x="8" y="1" width="2" height="1" fill="#303030"/><rect x="1" y="2" width="1" height="1" fill="#303030"/><rect x="1" y="3" width="1" height="1" fill="#303030"/><rect x="0" y="4" width="1" height="1" fill="#303030"/><rect x="0" y="5" width="1" height="1" fill="#303030"/><rect x="0" y="6" width="1" height="1" fill="#303030"/><rect x="0" y="7" width="1" height="1" fill="#303030"/><rect x="1" y="8" width="1" height="1" fill="#303030"/><rect x="1" y="9" width="1" height="1" fill="#303030"/><rect x="4" y="1" width="4" height="1" fill="#000"/><rect x="2" y="2" width="2" height="1" fill="#000"/><rect x="8" y="2" width="2" height="1" fill="#000"/><rect x="2" y="3" width="1" height="1" fill="#000"/><rect x="1" y="4" width="1" height="1" fill="#000"/><rect x="1" y="5" width="1" height="1" fill="#000"/><rect x="1" y="6" width="1" height="1" fill="#000"/><rect x="1" y="7" width="1" height="1" fill="#000"/><rect x="2" y="8" width="1" height="1" fill="#000"/><rect x="2" y="9" width="1" height="1" fill="#000"/></svg>
<span class="t" style="left:615.90px;top:476px;line-height:14px;height:14px;transform:scaleX(0.8120)">Outline</span>
<div class="sunk" style="left:660px;top:474px;width:44px;height:20px"><div class="sb" style="top:2px;left:26px"></div><div class="sb" style="top:10px;left:26px"></div><svg style="position:absolute;left:26px;top:2px" width="16" height="16" viewBox="0 0 16 16"><path d="M8 3h1v1h1v1h-3v-1h1z M7 11h3v1h-1v1h-1v-1h-1z" fill="#8c8c8c"/></svg></div>
<span class="t" style="left:664.30px;top:478px;line-height:14px;height:14px;color:#8c8c8c;transform:scaleX(0.8143)">2</span>
<span class="t" style="left:712.10px;top:477px;line-height:14px;height:14px;color:#8c8c8c;transform:scaleX(0.8293)">+ Shadow</span>
<div class="sunk" style="left:769px;top:474px;width:44px;height:20px"><div class="sb" style="top:2px;left:26px"></div><div class="sb" style="top:10px;left:26px"></div><svg style="position:absolute;left:26px;top:2px" width="16" height="16" viewBox="0 0 16 16"><path d="M8 3h1v1h1v1h-3v-1h1z M7 11h3v1h-1v1h-1v-1h-1z" fill="#8c8c8c"/></svg></div>
<span class="t" style="left:773.50px;top:478px;line-height:14px;height:14px;color:#8c8c8c;transform:scaleX(0.7857)">0</span>
<svg style="position:absolute;left:596px;top:500px" width="12" height="12" viewBox="0 0 12 12" shape-rendering="crispEdges"><rect x="10" y="2" width="1" height="1" fill="#C2C5C5"/><rect x="10" y="3" width="1" height="1" fill="#C2C5C5"/><rect x="11" y="4" width="1" height="1" fill="#C2C5C5"/><rect x="11" y="5" width="1" height="1" fill="#C2C5C5"/><rect x="11" y="6" width="1" height="1" fill="#C2C5C5"/><rect x="11" y="7" width="1" height="1" fill="#C2C5C5"/><rect x="10" y="8" width="1" height="1" fill="#C2C5C5"/><rect x="10" y="9" width="1" height="1" fill="#C2C5C5"/><rect x="2" y="10" width="2" height="1" fill="#C2C5C5"/><rect x="8" y="10" width="2" height="1" fill="#C2C5C5"/><rect x="4" y="11" width="4" height="1" fill="#C2C5C5"/><rect x="9" y="3" width="1" height="1" fill="#C2C5C5"/><rect x="10" y="4" width="1" height="1" fill="#C2C5C5"/><rect x="10" y="5" width="1" height="1" fill="#C2C5C5"/><rect x="10" y="6" width="1" height="1" fill="#C2C5C5"/><rect x="10" y="7" width="1" height="1" fill="#C2C5C5"/><rect x="9" y="8" width="1" height="1" fill="#C2C5C5"/><rect x="8" y="9" width="2" height="1" fill="#C2C5C5"/><rect x="4" y="10" width="4" height="1" fill="#C2C5C5"/><rect x="3" y="9" width="1" height="1" fill="#C2C5C5"/><rect x="4" y="0" width="4" height="1" fill="#303030"/><rect x="2" y="1" width="2" height="1" fill="#303030"/><rect x="8" y="1" width="2" height="1" fill="#303030"/><rect x="1" y="2" width="1" height="1" fill="#303030"/><rect x="1" y="3" width="1" height="1" fill="#303030"/><rect x="0" y="4" width="1" height="1" fill="#303030"/><rect x="0" y="5" width="1" height="1" fill="#303030"/><rect x="0" y="6" width="1" height="1" fill="#303030"/><rect x="0" y="7" width="1" height="1" fill="#303030"/><rect x="1" y="8" width="1" height="1" fill="#303030"/><rect x="1" y="9" width="1" height="1" fill="#303030"/><rect x="4" y="1" width="4" height="1" fill="#000"/><rect x="2" y="2" width="2" height="1" fill="#000"/><rect x="8" y="2" width="2" height="1" fill="#000"/><rect x="2" y="3" width="1" height="1" fill="#000"/><rect x="1" y="4" width="1" height="1" fill="#000"/><rect x="1" y="5" width="1" height="1" fill="#000"/><rect x="1" y="6" width="1" height="1" fill="#000"/><rect x="1" y="7" width="1" height="1" fill="#000"/><rect x="2" y="8" width="1" height="1" fill="#000"/><rect x="2" y="9" width="1" height="1" fill="#000"/></svg>
<svg style="position:absolute;left:596px;top:500px" width="12" height="12" viewBox="0 0 12 12"><circle cx="6" cy="5.8" r="3.2" fill="#000"/></svg>
<span class="t" style="left:615.90px;top:500px;line-height:14px;height:14px;transform:scaleX(0.8423)">Opaque box (uses outline color)</span>
<div class="btn" style="left:817px;top:598px;width:75px;height:21px"></div>
<span class="t" style="left:845.60px;top:602px;line-height:14px;height:14px;transform:scaleX(0.8225)"><u>O</u>K</span>
<div class="btn" style="left:898px;top:598px;width:75px;height:21px"></div>
<span class="t" style="left:917.50px;top:602px;line-height:14px;height:14px;transform:scaleX(0.8575)">C<u>a</u>ncel</span>
</body></html>
